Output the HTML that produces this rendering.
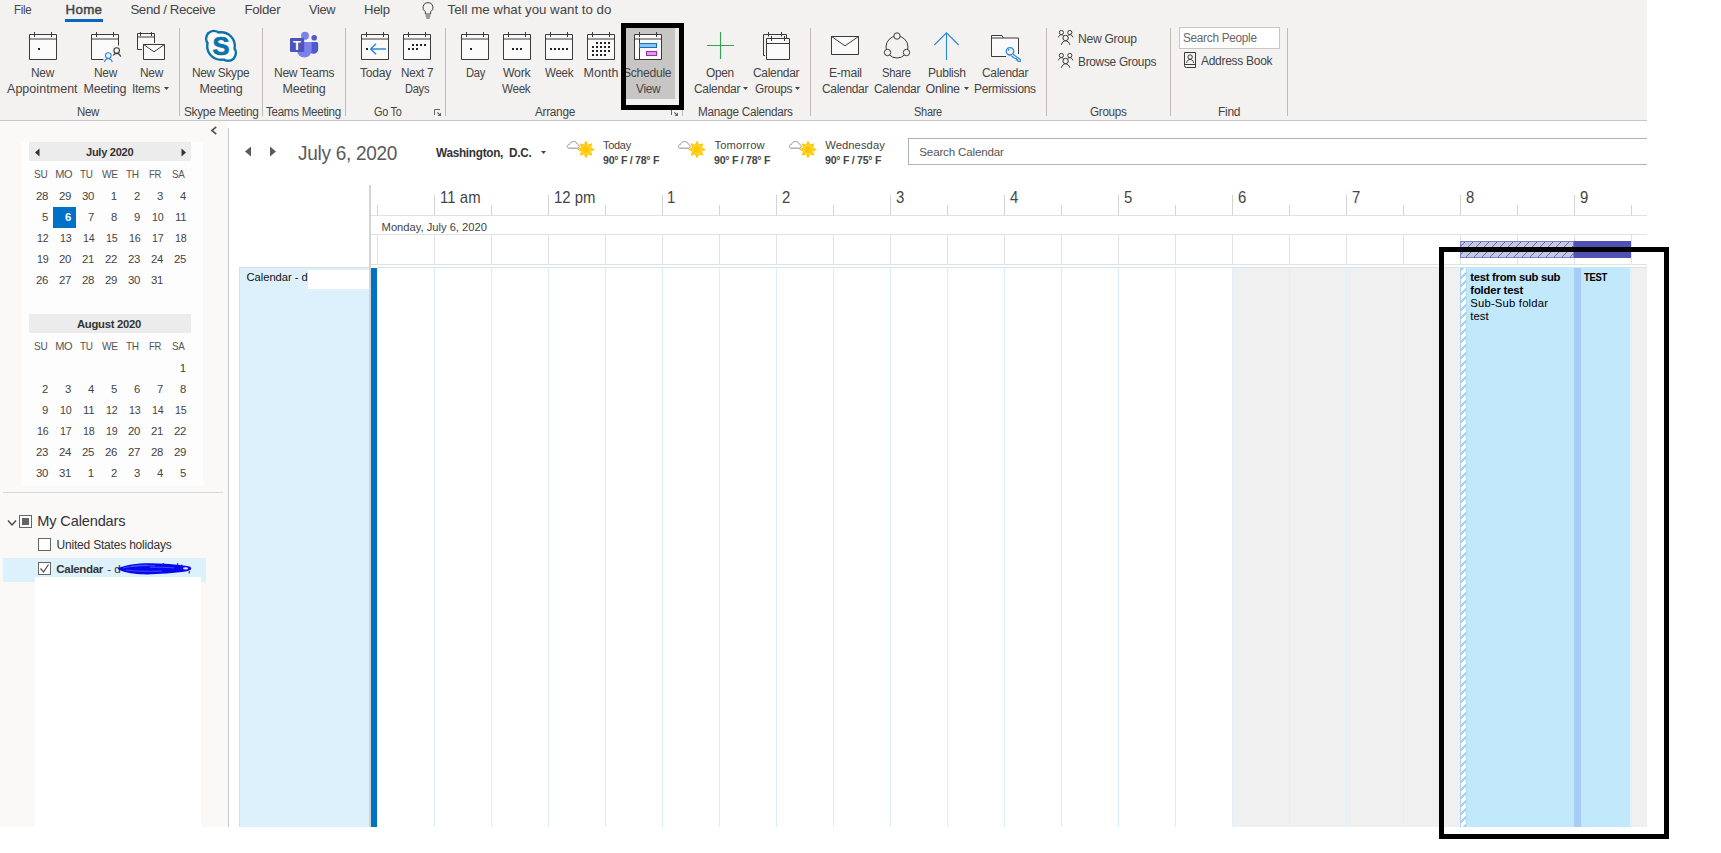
<!DOCTYPE html>
<html><head><meta charset="utf-8"><title>Calendar - Outlook</title>
<style>
html,body{margin:0;padding:0;background:#fff;}
body{width:1721px;height:853px;position:relative;overflow:hidden;font-family:"Liberation Sans",sans-serif;color:#444;}
.r{position:absolute;display:block;}
.t{position:absolute;white-space:pre;line-height:20px;}
</style></head><body>
<div class="r" style="left:0.0px;top:0.0px;width:1647.0px;height:120.0px;background:#f3f2f1;"></div>
<div class="r" style="left:0.0px;top:120.0px;width:1647.0px;height:1.0px;background:#c8c6c4;"></div>
<div class="r" style="left:0.0px;top:121.0px;width:228.0px;height:706.0px;background:#faf9f8;"></div>
<div class="r" style="left:22.0px;top:142.0px;width:181.0px;height:344.0px;background:#fdfdfd;"></div>
<div class="r" style="left:228.0px;top:128.0px;width:1.0px;height:699.0px;background:#c8c8c8;"></div>
<span class="t" style="left:14.4px;top:-0.01px;font-size:13.30px;letter-spacing:-0.300px;transform:scaleX(0.857);transform-origin:0 0;">File</span>
<span class="t" style="left:65.6px;top:-0.01px;font-size:13.30px;letter-spacing:0.307px;-webkit-text-stroke:0.45px #444;">Home</span>
<div class="r" style="left:65.0px;top:19.0px;width:38.0px;height:3.0px;background:#0667c0;"></div>
<span class="t" style="left:130.4px;top:-0.01px;font-size:13.30px;letter-spacing:-0.385px;">Send / Receive</span>
<span class="t" style="left:244.4px;top:-0.01px;font-size:13.30px;letter-spacing:-0.300px;">Folder</span>
<span class="t" style="left:309.4px;top:-0.01px;font-size:13.30px;letter-spacing:-0.300px;transform:scaleX(0.961);transform-origin:0 0;">View</span>
<span class="t" style="left:364.4px;top:-0.01px;font-size:13.30px;letter-spacing:-0.300px;transform:scaleX(0.983);transform-origin:0 0;">Help</span>
<span class="t" style="left:447.6px;top:-0.01px;font-size:13.30px;letter-spacing:-0.012px;">Tell me what you want to do</span>
<svg class="r" style="left:420.0px;top:1.0px;" width="16" height="19" viewBox="0 0 16 19"><path d="M8 1.5a5 5 0 0 0-2.6 9.3V13h5.2v-2.2A5 5 0 0 0 8 1.5z" fill="none" stroke="#444" stroke-width="1"/><path d="M5.6 15h4.8M6.2 17h3.6" stroke="#444" stroke-width="1" fill="none"/></svg>
<div class="r" style="left:178.9px;top:28.0px;width:1.0px;height:88.0px;background:#bebbb8;"></div>
<div class="r" style="left:262.1px;top:28.0px;width:1.0px;height:88.0px;background:#bebbb8;"></div>
<div class="r" style="left:345.1px;top:28.0px;width:1.0px;height:88.0px;background:#bebbb8;"></div>
<div class="r" style="left:445.1px;top:28.0px;width:1.0px;height:88.0px;background:#bebbb8;"></div>
<div class="r" style="left:682.1px;top:28.0px;width:1.0px;height:88.0px;background:#bebbb8;"></div>
<div class="r" style="left:810.1px;top:28.0px;width:1.0px;height:88.0px;background:#bebbb8;"></div>
<div class="r" style="left:1045.9px;top:28.0px;width:1.0px;height:88.0px;background:#bebbb8;"></div>
<div class="r" style="left:1169.9px;top:28.0px;width:1.0px;height:88.0px;background:#bebbb8;"></div>
<div class="r" style="left:1287.1px;top:28.0px;width:1.0px;height:88.0px;background:#bebbb8;"></div>
<svg class="r" style="left:27px;top:30px;" width="34" height="34" viewBox="27 30 34 34"><path d="M29.5 34.5h27v25h-27z" fill="#fafafa" stroke="#3b3a39"/><path d="M34.5 32v5M51.5 32v5M29.5 39h27" stroke="#3b3a39" fill="none"/><rect x="38" y="48" width="2" height="2" fill="#222"/></svg>
<span class="t" style="left:31.4px;top:62.87px;font-size:12.50px;letter-spacing:-0.300px;transform:scaleX(0.951);transform-origin:0 0;">New</span>
<span class="t" style="left:7.0px;top:78.87px;font-size:12.50px;letter-spacing:0.041px;">Appointment</span>
<svg class="r" style="left:88px;top:30px;" width="36" height="34" viewBox="88 30 36 34"><path d="M91.5 34.5h27v25h-27z" fill="#fafafa" stroke="#3b3a39"/><path d="M96.5 32v5M113.5 32v5M91.5 39h27" stroke="#3b3a39" fill="none"/><path d="M103.500 53h20v11h-20zM112 45.500h12v8h-12z" fill="#f3f2f1"/><circle cx="108.300" cy="55.600" r="2.800" fill="none" stroke="#2b88d8" stroke-width="1.100"/><path d="M104.300 62c.8-2.600 2.300-3.400 4-3.400s3.200.8 4 3.400" fill="none" stroke="#2b88d8" stroke-width="1.100"/><circle cx="116.700" cy="50.500" r="2.800" fill="none" stroke="#3b3a39" stroke-width="1.100"/><path d="M113.200 55.500c.9-1.600 2-2.100 3.500-2.100 1.700 0 3.200.9 4 3.300" fill="none" stroke="#3b3a39" stroke-width="1.100"/></svg>
<span class="t" style="left:93.6px;top:62.87px;font-size:12.50px;letter-spacing:-0.300px;transform:scaleX(0.951);transform-origin:0 0;">New</span>
<span class="t" style="left:83.6px;top:78.87px;font-size:12.50px;letter-spacing:-0.279px;">Meeting</span>
<svg class="r" style="left:135px;top:30px;" width="32" height="32" viewBox="135 30 32 32"><path d="M137.500 33.500h17v16h-17z" fill="#fafafa" stroke="#3b3a39"/><path d="M140.500 32v4M151.500 32v4M137.500 37h17" stroke="#3b3a39" fill="none"/><path d="M142 43h14v8h-14z" fill="#f3f2f1"/><path d="M143.500 44.500h21v15h-21z" fill="#fafafa" stroke="#3b3a39"/><path d="M143.500 44.500l10.500 7.300 10.500-7.300" fill="none" stroke="#3b3a39"/></svg>
<span class="t" style="left:139.6px;top:62.87px;font-size:12.50px;letter-spacing:-0.300px;transform:scaleX(0.951);transform-origin:0 0;">New</span>
<span class="t" style="left:132.4px;top:78.87px;font-size:12.50px;letter-spacing:-0.300px;transform:scaleX(0.960);transform-origin:0 0;">Items</span>
<svg class="r" style="left:164.0px;top:87.0px;" width="5" height="3" viewBox="0 0 5 3"><path d="M0 0h5L2.5 3z" fill="#444"/></svg>
<span class="t" style="left:76.6px;top:101.87px;font-size:12.50px;letter-spacing:-0.300px;transform:scaleX(0.918);transform-origin:0 0;">New</span>
<svg class="r" style="left:202px;top:27px;" width="38" height="38" viewBox="202 27 38 38"><g fill="#0b72ab"><circle cx="221" cy="46" r="15"/><circle cx="213.900" cy="38.700" r="9"/><circle cx="228.200" cy="53.100" r="8.900"/></g><g fill="#fff"><circle cx="221" cy="46" r="12.600"/><circle cx="213.900" cy="38.700" r="6.600"/><circle cx="228.200" cy="53.100" r="6.500"/></g><text x="221" y="55" font-family="Liberation Sans, sans-serif" font-weight="700" font-size="25.500" fill="#0b72ab" stroke="#0b72ab" stroke-width=".700" text-anchor="middle">S</text></svg>
<span class="t" style="left:192.4px;top:62.87px;font-size:12.50px;letter-spacing:-0.300px;transform:scaleX(0.947);transform-origin:0 0;">New Skype</span>
<span class="t" style="left:199.6px;top:78.87px;font-size:12.50px;letter-spacing:-0.245px;">Meeting</span>
<span class="t" style="left:183.6px;top:101.87px;font-size:12.50px;letter-spacing:-0.300px;transform:scaleX(0.946);transform-origin:0 0;">Skype Meeting</span>
<svg class="r" style="left:288px;top:30px;" width="32" height="30" viewBox="288 30 32 30"><circle cx="314.200" cy="37.800" r="2.800" fill="#5059c9"/><path d="M309 42h7.700a1.500 1.500 0 0 1 1.500 1.500v5.700a4.600 4.600 0 0 1-9.200 0z" fill="#5059c9"/><circle cx="305" cy="35.800" r="3.950" fill="#7b83eb"/><path d="M297 42h14.700v8.200a7.350 7.350 0 0 1-14.700 0z" fill="#7b83eb"/><rect x="290" y="38" width="14.200" height="14" rx="1" fill="#4b53bc"/><text x="297.100" y="49.900" font-family="Liberation Sans, sans-serif" font-weight="700" font-size="13" fill="#fff" text-anchor="middle">T</text></svg>
<span class="t" style="left:273.6px;top:62.87px;font-size:12.50px;letter-spacing:-0.300px;transform:scaleX(0.964);transform-origin:0 0;">New Teams</span>
<span class="t" style="left:282.6px;top:78.87px;font-size:12.50px;letter-spacing:-0.245px;">Meeting</span>
<span class="t" style="left:266.4px;top:101.87px;font-size:12.50px;letter-spacing:-0.300px;transform:scaleX(0.927);transform-origin:0 0;">Teams Meeting</span>
<svg class="r" style="left:359px;top:30px;" width="34" height="34" viewBox="359 30 34 34"><path d="M361.5 34.5h27v25h-27z" fill="#fafafa" stroke="#3b3a39"/><path d="M366.5 32v5M383.5 32v5M361.5 39h27" stroke="#3b3a39" fill="none"/><rect x="366" y="48" width="2" height="2" fill="#222"/><path d="M386 49H371M376 43.700l-5.300 5.300 5.300 5.300" fill="none" stroke="#2b88d8" stroke-width="1.400"/></svg>
<span class="t" style="left:359.6px;top:62.87px;font-size:12.50px;letter-spacing:-0.300px;transform:scaleX(0.976);transform-origin:0 0;">Today</span>
<svg class="r" style="left:401px;top:30px;" width="34" height="34" viewBox="401 30 34 34"><path d="M403.5 34.5h27v25h-27z" fill="#fafafa" stroke="#3b3a39"/><path d="M408.5 32v5M425.5 32v5M403.5 39h27" stroke="#3b3a39" fill="none"/><rect x="412" y="44" width="2" height="2" fill="#222"/><rect x="416" y="44" width="2" height="2" fill="#222"/><rect x="420" y="44" width="2" height="2" fill="#222"/><rect x="424" y="44" width="2" height="2" fill="#222"/><rect x="408" y="48" width="2" height="2" fill="#222"/><rect x="412" y="48" width="2" height="2" fill="#222"/><rect x="416" y="48" width="2" height="2" fill="#222"/></svg>
<span class="t" style="left:400.6px;top:62.87px;font-size:12.50px;letter-spacing:-0.300px;transform:scaleX(0.936);transform-origin:0 0;">Next 7</span>
<span class="t" style="left:404.6px;top:78.87px;font-size:12.50px;letter-spacing:-0.300px;transform:scaleX(0.885);transform-origin:0 0;">Days</span>
<span class="t" style="left:373.6px;top:101.87px;font-size:12.50px;letter-spacing:-0.300px;transform:scaleX(0.871);transform-origin:0 0;">Go To</span>
<svg class="r" style="left:434.0px;top:109.0px;" width="8" height="8" viewBox="0 0 8 8"><path d="M0.500 6V0.500H6" fill="none" stroke="#666"/><path d="M3.300 3.300l2.500 2.500" stroke="#666" stroke-width="1.200"/><path d="M7 3.500V7H3.500z" fill="#666"/></svg>
<svg class="r" style="left:459px;top:30px;" width="34" height="34" viewBox="459 30 34 34"><path d="M461.5 34.5h27v25h-27z" fill="#fafafa" stroke="#3b3a39"/><path d="M466.5 32v5M483.5 32v5M461.5 39h27" stroke="#3b3a39" fill="none"/><rect x="470" y="48" width="2" height="2" fill="#222"/></svg>
<span class="t" style="left:465.6px;top:62.87px;font-size:12.50px;letter-spacing:-0.300px;transform:scaleX(0.897);transform-origin:0 0;">Day</span>
<svg class="r" style="left:501px;top:30px;" width="34" height="34" viewBox="501 30 34 34"><path d="M503.5 34.5h27v25h-27z" fill="#fafafa" stroke="#3b3a39"/><path d="M508.5 32v5M525.5 32v5M503.5 39h27" stroke="#3b3a39" fill="none"/><rect x="512" y="48" width="2" height="2" fill="#222"/><rect x="516" y="48" width="2" height="2" fill="#222"/><rect x="520" y="48" width="2" height="2" fill="#222"/></svg>
<span class="t" style="left:503.4px;top:62.87px;font-size:12.50px;letter-spacing:-0.300px;transform:scaleX(0.984);transform-origin:0 0;">Work</span>
<span class="t" style="left:502.4px;top:78.87px;font-size:12.50px;letter-spacing:-0.300px;transform:scaleX(0.928);transform-origin:0 0;">Week</span>
<svg class="r" style="left:543px;top:30px;" width="34" height="34" viewBox="543 30 34 34"><path d="M545.5 34.5h27v25h-27z" fill="#fafafa" stroke="#3b3a39"/><path d="M550.5 32v5M567.5 32v5M545.5 39h27" stroke="#3b3a39" fill="none"/><rect x="550" y="48" width="2" height="2" fill="#222"/><rect x="554" y="48" width="2" height="2" fill="#222"/><rect x="558" y="48" width="2" height="2" fill="#222"/><rect x="562" y="48" width="2" height="2" fill="#222"/><rect x="566" y="48" width="2" height="2" fill="#222"/></svg>
<span class="t" style="left:544.6px;top:62.87px;font-size:12.50px;letter-spacing:-0.300px;transform:scaleX(0.921);transform-origin:0 0;">Week</span>
<svg class="r" style="left:585px;top:30px;" width="34" height="34" viewBox="585 30 34 34"><path d="M587.5 34.5h27v25h-27z" fill="#fafafa" stroke="#3b3a39"/><path d="M592.5 32v5M609.5 32v5M587.5 39h27" stroke="#3b3a39" fill="none"/><rect x="596" y="42" width="2" height="2" fill="#222"/><rect x="600" y="42" width="2" height="2" fill="#222"/><rect x="604" y="42" width="2" height="2" fill="#222"/><rect x="608" y="42" width="2" height="2" fill="#222"/><rect x="592" y="46" width="2" height="2" fill="#222"/><rect x="596" y="46" width="2" height="2" fill="#222"/><rect x="600" y="46" width="2" height="2" fill="#222"/><rect x="604" y="46" width="2" height="2" fill="#222"/><rect x="608" y="46" width="2" height="2" fill="#222"/><rect x="592" y="50" width="2" height="2" fill="#222"/><rect x="596" y="50" width="2" height="2" fill="#222"/><rect x="600" y="50" width="2" height="2" fill="#222"/><rect x="604" y="50" width="2" height="2" fill="#222"/><rect x="608" y="50" width="2" height="2" fill="#222"/><rect x="592" y="54" width="2" height="2" fill="#222"/><rect x="596" y="54" width="2" height="2" fill="#222"/><rect x="600" y="54" width="2" height="2" fill="#222"/><rect x="604" y="54" width="2" height="2" fill="#222"/></svg>
<span class="t" style="left:583.6px;top:62.87px;font-size:12.50px;letter-spacing:0.014px;">Month</span>
<span class="t" style="left:535.4px;top:101.87px;font-size:12.50px;letter-spacing:-0.300px;transform:scaleX(0.942);transform-origin:0 0;">Arrange</span>
<div class="r" style="left:626.0px;top:28.0px;width:49.0px;height:71.0px;background:#c8c6c4;"></div>
<div class="r" style="left:675.0px;top:28.0px;width:4.0px;height:71.0px;background:#edebe9;"></div>
<svg class="r" style="left:632px;top:30px;" width="34" height="34" viewBox="632 30 34 34"><path d="M634.5 34.5h27v25h-27z" fill="#fafafa" stroke="#3b3a39"/><path d="M639.5 32v5M656.5 32v5M634.5 39h27" stroke="#3b3a39" fill="none"/><path d="M639.500 38.500v21" stroke="#3b3a39" fill="none"/><rect x="639.500" y="43.500" width="17" height="4" fill="#8ec4f0" stroke="#1072c6"/><rect x="646.500" y="51.500" width="10" height="4" fill="#dc9ede" stroke="#9c27b0"/></svg>
<span class="t" style="left:623.4px;top:62.87px;font-size:12.50px;letter-spacing:-0.300px;transform:scaleX(0.971);transform-origin:0 0;">Schedule</span>
<span class="t" style="left:636.4px;top:78.87px;font-size:12.50px;letter-spacing:-0.300px;transform:scaleX(0.947);transform-origin:0 0;">View</span>
<svg class="r" style="left:671.0px;top:109.0px;" width="8" height="8" viewBox="0 0 8 8"><path d="M0.500 6V0.500H6" fill="none" stroke="#666"/><path d="M3.300 3.300l2.500 2.500" stroke="#666" stroke-width="1.200"/><path d="M7 3.500V7H3.500z" fill="#666"/></svg>
<div class="r" style="left:621px;top:23px;width:53px;height:77px;border:5px solid #000;"></div>
<svg class="r" style="left:705px;top:30px;" width="32" height="32" viewBox="705 30 32 32"><path d="M720.500 32v27M707 45.500h27" stroke="#31a350" stroke-width="1.100" fill="none"/></svg>
<span class="t" style="left:706.4px;top:62.87px;font-size:12.50px;letter-spacing:-0.300px;transform:scaleX(0.950);transform-origin:0 0;">Open</span>
<span class="t" style="left:693.6px;top:78.87px;font-size:12.50px;letter-spacing:-0.300px;transform:scaleX(0.954);transform-origin:0 0;">Calendar</span>
<svg class="r" style="left:743.0px;top:87.0px;" width="5" height="3" viewBox="0 0 5 3"><path d="M0 0h5L2.5 3z" fill="#444"/></svg>
<svg class="r" style="left:761px;top:30px;" width="32" height="32" viewBox="761 30 32 32"><path d="M765 55.500h-1.500v-21h23v4" fill="none" stroke="#3b3a39"/><path d="M768.500 32v4.500M781.500 32v4.500" stroke="#3b3a39"/><path d="M766.500 38.500h23v21h-23z" fill="#fafafa" stroke="#3b3a39"/><path d="M771.500 36v5M784.500 36v5M766.500 43.500h23" stroke="#3b3a39" fill="none"/></svg>
<span class="t" style="left:753.4px;top:62.87px;font-size:12.50px;letter-spacing:-0.300px;transform:scaleX(0.958);transform-origin:0 0;">Calendar</span>
<span class="t" style="left:754.6px;top:78.87px;font-size:12.50px;letter-spacing:-0.300px;transform:scaleX(0.947);transform-origin:0 0;">Groups</span>
<svg class="r" style="left:795.4px;top:87.0px;" width="5" height="3" viewBox="0 0 5 3"><path d="M0 0h5L2.5 3z" fill="#444"/></svg>
<span class="t" style="left:698.4px;top:101.87px;font-size:12.50px;letter-spacing:-0.300px;transform:scaleX(0.939);transform-origin:0 0;">Manage Calendars</span>
<svg class="r" style="left:829px;top:34px;" width="32" height="23" viewBox="829 34 32 23"><path d="M831.500 36.500h27v18h-27z" fill="#fafafa" stroke="#3b3a39"/><path d="M831.500 36.500l13.500 9.300 13.500-9.300" fill="none" stroke="#3b3a39"/></svg>
<span class="t" style="left:828.6px;top:62.87px;font-size:12.50px;letter-spacing:-0.300px;transform:scaleX(0.973);transform-origin:0 0;">E-mail</span>
<span class="t" style="left:821.6px;top:78.87px;font-size:12.50px;letter-spacing:-0.300px;transform:scaleX(0.954);transform-origin:0 0;">Calendar</span>
<svg class="r" style="left:881px;top:30px;" width="32" height="32" viewBox="881 30 32 32"><circle cx="897" cy="47" r="11" fill="none" stroke="#3b3a39"/><circle cx="897" cy="36" r="3.200" fill="#f3f2f1" stroke="#3b3a39"/><circle cx="887.5" cy="52.5" r="3.200" fill="#f3f2f1" stroke="#3b3a39"/><circle cx="906.5" cy="52.5" r="3.200" fill="#f3f2f1" stroke="#3b3a39"/></svg>
<span class="t" style="left:882.0px;top:62.87px;font-size:12.50px;letter-spacing:-0.300px;transform:scaleX(0.902);transform-origin:0 0;">Share</span>
<span class="t" style="left:873.6px;top:78.87px;font-size:12.50px;letter-spacing:-0.300px;transform:scaleX(0.954);transform-origin:0 0;">Calendar</span>
<svg class="r" style="left:931px;top:30px;" width="32" height="32" viewBox="931 30 32 32"><path d="M946.500 60V32.800M934.300 45l12.200-12.200 12.200 12.200" fill="none" stroke="#2b88d8" stroke-width="1.100"/></svg>
<span class="t" style="left:927.6px;top:62.87px;font-size:12.50px;letter-spacing:-0.300px;transform:scaleX(0.969);transform-origin:0 0;">Publish</span>
<span class="t" style="left:925.6px;top:78.87px;font-size:12.50px;letter-spacing:-0.347px;">Online</span>
<svg class="r" style="left:963.6px;top:87.0px;" width="5" height="3" viewBox="0 0 5 3"><path d="M0 0h5L2.5 3z" fill="#444"/></svg>
<svg class="r" style="left:989px;top:33px;" width="35" height="31" viewBox="989 33 35 31"><path d="M1006 56.500h-14.500v-21h10.500l1.500 2.500h15v16" fill="#fafafa" stroke="#3b3a39"/><path d="M991.500 38h12" stroke="#3b3a39" fill="none"/><path d="M1010 51l10 10" stroke="#f3f2f1" stroke-width="5"/><circle cx="1010" cy="51.300" r="5.400" fill="#f3f2f1"/><circle cx="1010" cy="51.300" r="3.700" fill="#f3f2f1" stroke="#2b88d8" stroke-width="1.300"/><circle cx="1008.600" cy="49.800" r=".900" fill="#2b88d8"/><path d="M1012.700 54l7.600 5.500v2h-2.300v-1.600h-1.700v-1.600h-1.700l-3.400-2.600" fill="#f3f2f1" stroke="#2b88d8" stroke-width="1.100" stroke-linejoin="round"/></svg>
<span class="t" style="left:981.6px;top:62.87px;font-size:12.50px;letter-spacing:-0.300px;transform:scaleX(0.954);transform-origin:0 0;">Calendar</span>
<span class="t" style="left:973.6px;top:78.87px;font-size:12.50px;letter-spacing:-0.300px;transform:scaleX(0.953);transform-origin:0 0;">Permissions</span>
<span class="t" style="left:914.4px;top:101.87px;font-size:12.50px;letter-spacing:-0.300px;transform:scaleX(0.877);transform-origin:0 0;">Share</span>
<svg class="r" style="left:1057px;top:29.9px" width="18" height="16" viewBox="1057 0 18 16"><circle cx="1061.400" cy="2.500" r="2.100" fill="none" stroke="#3b3a39"/><circle cx="1069.800" cy="2.500" r="2.100" fill="none" stroke="#3b3a39"/><path d="M1058.300 7.300c.8-1.900 1.900-2.600 3.100-2.600 1 0 1.700.4 2.200 1M1072.900 7.300c-.8-1.900-1.900-2.600-3.100-2.600-1 0-1.700.4-2.200 1" fill="none" stroke="#3b3a39"/><circle cx="1065.600" cy="8" r="2.700" fill="none" stroke="#3b3a39"/><path d="M1061.300 14.800c1-2.700 2.500-4 4.300-4s3.300 1.300 4.300 4" fill="none" stroke="#3b3a39"/></svg>
<span class="t" style="left:1077.6px;top:28.67px;font-size:12.50px;letter-spacing:-0.300px;transform:scaleX(0.970);transform-origin:0 0;">New Group</span>
<svg class="r" style="left:1057px;top:52.9px" width="18" height="16" viewBox="1057 0 18 16"><circle cx="1061.400" cy="2.500" r="2.100" fill="none" stroke="#3b3a39"/><circle cx="1069.800" cy="2.500" r="2.100" fill="none" stroke="#3b3a39"/><path d="M1058.300 7.300c.8-1.900 1.900-2.600 3.100-2.600 1 0 1.700.4 2.200 1M1072.900 7.300c-.8-1.900-1.900-2.600-3.100-2.600-1 0-1.700.4-2.200 1" fill="none" stroke="#3b3a39"/><circle cx="1065.600" cy="8" r="2.700" fill="none" stroke="#3b3a39"/><path d="M1061.300 14.800c1-2.700 2.500-4 4.300-4s3.300 1.300 4.300 4" fill="none" stroke="#3b3a39"/></svg>
<span class="t" style="left:1077.6px;top:51.67px;font-size:12.50px;letter-spacing:-0.300px;transform:scaleX(0.950);transform-origin:0 0;">Browse Groups</span>
<span class="t" style="left:1089.6px;top:101.87px;font-size:12.50px;letter-spacing:-0.300px;transform:scaleX(0.932);transform-origin:0 0;">Groups</span>
<div class="r" style="left:1179px;top:27px;width:99px;height:20px;background:#fff;border:1px solid #c8c6c4;"></div>
<span class="t" style="left:1183.2px;top:27.57px;font-size:12.50px;letter-spacing:-0.300px;color:#666;transform:scaleX(0.943);transform-origin:0 0;">Search People</span>
<svg class="r" style="left:1183px;top:51px;" width="15" height="18" viewBox="1183 51 15 18"><path d="M1195.500 52.500h-11v13a2 2 0 0 0 2 2h9z" fill="none" stroke="#3b3a39"/><path d="M1184.500 64.500h11" stroke="#3b3a39"/><circle cx="1190.100" cy="57" r="2.200" fill="none" stroke="#3b3a39"/><path d="M1186.600 62.800c.4-2.300 1.800-3.300 3.500-3.300s3.100 1 3.500 3.300" fill="none" stroke="#3b3a39"/></svg>
<span class="t" style="left:1201.4px;top:50.67px;font-size:12.50px;letter-spacing:-0.300px;transform:scaleX(0.961);transform-origin:0 0;">Address Book</span>
<span class="t" style="left:1217.6px;top:101.87px;font-size:12.50px;letter-spacing:-0.300px;transform:scaleX(0.957);transform-origin:0 0;">Find</span>
<svg class="r" style="left:210.0px;top:126.0px;" width="8" height="9" viewBox="0 0 8 9"><path d="M6.200 .9L1.900 4.500 6.200 8.100" fill="none" stroke="#555" stroke-width="1.700"/></svg>
<div class="r" style="left:29.0px;top:142.0px;width:162.0px;height:19.0px;background:#ececec;"></div>
<span class="t" style="left:86.0px;top:141.98px;font-size:11.60px;letter-spacing:-0.300px;font-weight:700;color:#333;transform:scaleX(0.957);transform-origin:0 0;">July 2020</span>
<svg class="r" style="left:34.0px;top:147.5px;" width="6" height="9" viewBox="0 0 6 9"><path d="M5.500 0.500v8L1 4.500z" fill="#333"/></svg>
<svg class="r" style="left:180.5px;top:147.5px;" width="6" height="9" viewBox="0 0 6 9"><path d="M0.500 0.500v8L5 4.500z" fill="#333"/></svg>
<span class="t" style="left:34.0px;top:164.19px;font-size:11.00px;letter-spacing:-0.300px;color:#555;transform:scaleX(0.914);transform-origin:0 0;">SU</span>
<span class="t" style="left:55.3px;top:164.19px;font-size:11.00px;letter-spacing:-0.419px;color:#555;">MO</span>
<span class="t" style="left:80.3px;top:164.19px;font-size:11.00px;letter-spacing:-0.300px;color:#555;transform:scaleX(0.898);transform-origin:0 0;">TU</span>
<span class="t" style="left:101.5px;top:164.19px;font-size:11.00px;letter-spacing:-0.300px;color:#555;transform:scaleX(0.924);transform-origin:0 0;">WE</span>
<span class="t" style="left:126.4px;top:164.19px;font-size:11.00px;letter-spacing:-0.300px;color:#555;transform:scaleX(0.912);transform-origin:0 0;">TH</span>
<span class="t" style="left:149.3px;top:164.19px;font-size:11.00px;letter-spacing:-0.300px;color:#555;transform:scaleX(0.863);transform-origin:0 0;">FR</span>
<span class="t" style="left:172.2px;top:164.19px;font-size:11.00px;letter-spacing:-0.300px;color:#555;transform:scaleX(0.890);transform-origin:0 0;">SA</span>
<span class="t" style="left:36.0px;top:185.78px;font-size:11.60px;letter-spacing:-0.300px;transform:scaleX(0.984);transform-origin:0 0;">28</span>
<span class="t" style="left:59.0px;top:185.78px;font-size:11.60px;letter-spacing:-0.300px;transform:scaleX(0.984);transform-origin:0 0;">29</span>
<span class="t" style="left:82.0px;top:185.78px;font-size:11.60px;letter-spacing:-0.300px;transform:scaleX(0.984);transform-origin:0 0;">30</span>
<span class="t" style="left:110.8px;top:185.78px;font-size:11.60px;letter-spacing:0.000px;">1</span>
<span class="t" style="left:134.4px;top:185.78px;font-size:11.60px;letter-spacing:-0.300px;transform:scaleX(0.975);transform-origin:0 0;">2</span>
<span class="t" style="left:157.4px;top:185.78px;font-size:11.60px;letter-spacing:-0.300px;transform:scaleX(0.975);transform-origin:0 0;">3</span>
<span class="t" style="left:180.4px;top:185.78px;font-size:11.60px;letter-spacing:-0.300px;transform:scaleX(0.975);transform-origin:0 0;">4</span>
<span class="t" style="left:42.4px;top:206.78px;font-size:11.60px;letter-spacing:-0.300px;transform:scaleX(0.975);transform-origin:0 0;">5</span>
<div class="r" style="left:53.0px;top:207.0px;width:23.0px;height:21.0px;background:#0072c6;"></div>
<span class="t" style="left:65.4px;top:206.78px;font-size:11.60px;letter-spacing:-0.300px;font-weight:700;color:#fff;transform:scaleX(0.975);transform-origin:0 0;">6</span>
<span class="t" style="left:88.4px;top:206.78px;font-size:11.60px;letter-spacing:-0.300px;transform:scaleX(0.975);transform-origin:0 0;">7</span>
<span class="t" style="left:111.4px;top:206.78px;font-size:11.60px;letter-spacing:-0.300px;transform:scaleX(0.975);transform-origin:0 0;">8</span>
<span class="t" style="left:134.4px;top:206.78px;font-size:11.60px;letter-spacing:-0.300px;transform:scaleX(0.975);transform-origin:0 0;">9</span>
<span class="t" style="left:151.8px;top:206.78px;font-size:11.60px;letter-spacing:-0.300px;transform:scaleX(0.920);transform-origin:0 0;">10</span>
<span class="t" style="left:174.8px;top:206.78px;font-size:11.60px;letter-spacing:-0.300px;transform:scaleX(0.988);transform-origin:0 0;">11</span>
<span class="t" style="left:36.8px;top:227.78px;font-size:11.60px;letter-spacing:-0.300px;transform:scaleX(0.920);transform-origin:0 0;">12</span>
<span class="t" style="left:59.8px;top:227.78px;font-size:11.60px;letter-spacing:-0.300px;transform:scaleX(0.920);transform-origin:0 0;">13</span>
<span class="t" style="left:82.8px;top:227.78px;font-size:11.60px;letter-spacing:-0.300px;transform:scaleX(0.920);transform-origin:0 0;">14</span>
<span class="t" style="left:105.8px;top:227.78px;font-size:11.60px;letter-spacing:-0.300px;transform:scaleX(0.920);transform-origin:0 0;">15</span>
<span class="t" style="left:128.8px;top:227.78px;font-size:11.60px;letter-spacing:-0.300px;transform:scaleX(0.920);transform-origin:0 0;">16</span>
<span class="t" style="left:151.8px;top:227.78px;font-size:11.60px;letter-spacing:-0.300px;transform:scaleX(0.920);transform-origin:0 0;">17</span>
<span class="t" style="left:174.8px;top:227.78px;font-size:11.60px;letter-spacing:-0.300px;transform:scaleX(0.920);transform-origin:0 0;">18</span>
<span class="t" style="left:36.8px;top:248.78px;font-size:11.60px;letter-spacing:-0.300px;transform:scaleX(0.920);transform-origin:0 0;">19</span>
<span class="t" style="left:59.0px;top:248.78px;font-size:11.60px;letter-spacing:-0.300px;transform:scaleX(0.984);transform-origin:0 0;">20</span>
<span class="t" style="left:82.0px;top:248.78px;font-size:11.60px;letter-spacing:-0.300px;transform:scaleX(0.984);transform-origin:0 0;">21</span>
<span class="t" style="left:105.0px;top:248.78px;font-size:11.60px;letter-spacing:-0.300px;transform:scaleX(0.984);transform-origin:0 0;">22</span>
<span class="t" style="left:128.0px;top:248.78px;font-size:11.60px;letter-spacing:-0.300px;transform:scaleX(0.984);transform-origin:0 0;">23</span>
<span class="t" style="left:151.0px;top:248.78px;font-size:11.60px;letter-spacing:-0.300px;transform:scaleX(0.984);transform-origin:0 0;">24</span>
<span class="t" style="left:174.0px;top:248.78px;font-size:11.60px;letter-spacing:-0.300px;transform:scaleX(0.984);transform-origin:0 0;">25</span>
<span class="t" style="left:36.0px;top:269.78px;font-size:11.60px;letter-spacing:-0.300px;transform:scaleX(0.984);transform-origin:0 0;">26</span>
<span class="t" style="left:59.0px;top:269.78px;font-size:11.60px;letter-spacing:-0.300px;transform:scaleX(0.984);transform-origin:0 0;">27</span>
<span class="t" style="left:82.0px;top:269.78px;font-size:11.60px;letter-spacing:-0.300px;transform:scaleX(0.984);transform-origin:0 0;">28</span>
<span class="t" style="left:105.0px;top:269.78px;font-size:11.60px;letter-spacing:-0.300px;transform:scaleX(0.984);transform-origin:0 0;">29</span>
<span class="t" style="left:128.0px;top:269.78px;font-size:11.60px;letter-spacing:-0.300px;transform:scaleX(0.984);transform-origin:0 0;">30</span>
<span class="t" style="left:151.0px;top:269.78px;font-size:11.60px;letter-spacing:-0.300px;transform:scaleX(0.984);transform-origin:0 0;">31</span>
<div class="r" style="left:29.0px;top:314.0px;width:162.0px;height:19.0px;background:#ececec;"></div>
<span class="t" style="left:77.3px;top:313.98px;font-size:11.60px;letter-spacing:-0.300px;font-weight:700;color:#333;transform:scaleX(0.975);transform-origin:0 0;">August 2020</span>
<span class="t" style="left:34.0px;top:336.19px;font-size:11.00px;letter-spacing:-0.300px;color:#555;transform:scaleX(0.914);transform-origin:0 0;">SU</span>
<span class="t" style="left:55.3px;top:336.19px;font-size:11.00px;letter-spacing:-0.419px;color:#555;">MO</span>
<span class="t" style="left:80.3px;top:336.19px;font-size:11.00px;letter-spacing:-0.300px;color:#555;transform:scaleX(0.898);transform-origin:0 0;">TU</span>
<span class="t" style="left:101.5px;top:336.19px;font-size:11.00px;letter-spacing:-0.300px;color:#555;transform:scaleX(0.924);transform-origin:0 0;">WE</span>
<span class="t" style="left:126.4px;top:336.19px;font-size:11.00px;letter-spacing:-0.300px;color:#555;transform:scaleX(0.912);transform-origin:0 0;">TH</span>
<span class="t" style="left:149.3px;top:336.19px;font-size:11.00px;letter-spacing:-0.300px;color:#555;transform:scaleX(0.863);transform-origin:0 0;">FR</span>
<span class="t" style="left:172.2px;top:336.19px;font-size:11.00px;letter-spacing:-0.300px;color:#555;transform:scaleX(0.890);transform-origin:0 0;">SA</span>
<span class="t" style="left:179.8px;top:357.78px;font-size:11.60px;letter-spacing:0.000px;">1</span>
<span class="t" style="left:42.4px;top:378.78px;font-size:11.60px;letter-spacing:-0.300px;transform:scaleX(0.975);transform-origin:0 0;">2</span>
<span class="t" style="left:65.4px;top:378.78px;font-size:11.60px;letter-spacing:-0.300px;transform:scaleX(0.975);transform-origin:0 0;">3</span>
<span class="t" style="left:88.4px;top:378.78px;font-size:11.60px;letter-spacing:-0.300px;transform:scaleX(0.975);transform-origin:0 0;">4</span>
<span class="t" style="left:111.4px;top:378.78px;font-size:11.60px;letter-spacing:-0.300px;transform:scaleX(0.975);transform-origin:0 0;">5</span>
<span class="t" style="left:134.4px;top:378.78px;font-size:11.60px;letter-spacing:-0.300px;transform:scaleX(0.975);transform-origin:0 0;">6</span>
<span class="t" style="left:157.4px;top:378.78px;font-size:11.60px;letter-spacing:-0.300px;transform:scaleX(0.975);transform-origin:0 0;">7</span>
<span class="t" style="left:180.4px;top:378.78px;font-size:11.60px;letter-spacing:-0.300px;transform:scaleX(0.975);transform-origin:0 0;">8</span>
<span class="t" style="left:42.4px;top:399.78px;font-size:11.60px;letter-spacing:-0.300px;transform:scaleX(0.975);transform-origin:0 0;">9</span>
<span class="t" style="left:59.8px;top:399.78px;font-size:11.60px;letter-spacing:-0.300px;transform:scaleX(0.920);transform-origin:0 0;">10</span>
<span class="t" style="left:82.8px;top:399.78px;font-size:11.60px;letter-spacing:-0.300px;transform:scaleX(0.988);transform-origin:0 0;">11</span>
<span class="t" style="left:105.8px;top:399.78px;font-size:11.60px;letter-spacing:-0.300px;transform:scaleX(0.920);transform-origin:0 0;">12</span>
<span class="t" style="left:128.8px;top:399.78px;font-size:11.60px;letter-spacing:-0.300px;transform:scaleX(0.920);transform-origin:0 0;">13</span>
<span class="t" style="left:151.8px;top:399.78px;font-size:11.60px;letter-spacing:-0.300px;transform:scaleX(0.920);transform-origin:0 0;">14</span>
<span class="t" style="left:174.8px;top:399.78px;font-size:11.60px;letter-spacing:-0.300px;transform:scaleX(0.920);transform-origin:0 0;">15</span>
<span class="t" style="left:36.8px;top:420.78px;font-size:11.60px;letter-spacing:-0.300px;transform:scaleX(0.920);transform-origin:0 0;">16</span>
<span class="t" style="left:59.8px;top:420.78px;font-size:11.60px;letter-spacing:-0.300px;transform:scaleX(0.920);transform-origin:0 0;">17</span>
<span class="t" style="left:82.8px;top:420.78px;font-size:11.60px;letter-spacing:-0.300px;transform:scaleX(0.920);transform-origin:0 0;">18</span>
<span class="t" style="left:105.8px;top:420.78px;font-size:11.60px;letter-spacing:-0.300px;transform:scaleX(0.920);transform-origin:0 0;">19</span>
<span class="t" style="left:128.0px;top:420.78px;font-size:11.60px;letter-spacing:-0.300px;transform:scaleX(0.984);transform-origin:0 0;">20</span>
<span class="t" style="left:151.0px;top:420.78px;font-size:11.60px;letter-spacing:-0.300px;transform:scaleX(0.984);transform-origin:0 0;">21</span>
<span class="t" style="left:174.0px;top:420.78px;font-size:11.60px;letter-spacing:-0.300px;transform:scaleX(0.984);transform-origin:0 0;">22</span>
<span class="t" style="left:36.0px;top:441.78px;font-size:11.60px;letter-spacing:-0.300px;transform:scaleX(0.984);transform-origin:0 0;">23</span>
<span class="t" style="left:59.0px;top:441.78px;font-size:11.60px;letter-spacing:-0.300px;transform:scaleX(0.984);transform-origin:0 0;">24</span>
<span class="t" style="left:82.0px;top:441.78px;font-size:11.60px;letter-spacing:-0.300px;transform:scaleX(0.984);transform-origin:0 0;">25</span>
<span class="t" style="left:105.0px;top:441.78px;font-size:11.60px;letter-spacing:-0.300px;transform:scaleX(0.984);transform-origin:0 0;">26</span>
<span class="t" style="left:128.0px;top:441.78px;font-size:11.60px;letter-spacing:-0.300px;transform:scaleX(0.984);transform-origin:0 0;">27</span>
<span class="t" style="left:151.0px;top:441.78px;font-size:11.60px;letter-spacing:-0.300px;transform:scaleX(0.984);transform-origin:0 0;">28</span>
<span class="t" style="left:174.0px;top:441.78px;font-size:11.60px;letter-spacing:-0.300px;transform:scaleX(0.984);transform-origin:0 0;">29</span>
<span class="t" style="left:36.0px;top:462.78px;font-size:11.60px;letter-spacing:-0.300px;transform:scaleX(0.984);transform-origin:0 0;">30</span>
<span class="t" style="left:59.0px;top:462.78px;font-size:11.60px;letter-spacing:-0.300px;transform:scaleX(0.984);transform-origin:0 0;">31</span>
<span class="t" style="left:87.8px;top:462.78px;font-size:11.60px;letter-spacing:0.000px;">1</span>
<span class="t" style="left:111.4px;top:462.78px;font-size:11.60px;letter-spacing:-0.300px;transform:scaleX(0.975);transform-origin:0 0;">2</span>
<span class="t" style="left:134.4px;top:462.78px;font-size:11.60px;letter-spacing:-0.300px;transform:scaleX(0.975);transform-origin:0 0;">3</span>
<span class="t" style="left:157.4px;top:462.78px;font-size:11.60px;letter-spacing:-0.300px;transform:scaleX(0.975);transform-origin:0 0;">4</span>
<span class="t" style="left:180.4px;top:462.78px;font-size:11.60px;letter-spacing:-0.300px;transform:scaleX(0.975);transform-origin:0 0;">5</span>
<div class="r" style="left:3.0px;top:492.0px;width:220.0px;height:1.0px;background:#d8d8d8;"></div>
<svg class="r" style="left:7.0px;top:519.0px;" width="10" height="8" viewBox="0 0 10 8"><path d="M1 1.500l4 4.500 4-4.500" fill="none" stroke="#444" stroke-width="1.300"/></svg>
<div class="r" style="left:19px;top:515px;width:11px;height:11px;border:1px solid #666;background:#fff;"></div>
<div class="r" style="left:22.0px;top:518.0px;width:7.0px;height:7.0px;background:#666;"></div>
<span class="t" style="left:37.3px;top:510.64px;font-size:14.60px;letter-spacing:-0.161px;color:#333;">My Calendars</span>
<div class="r" style="left:38px;top:538px;width:11px;height:11px;border:1px solid #666;background:#fff;"></div>
<span class="t" style="left:56.5px;top:534.54px;font-size:12.00px;letter-spacing:-0.195px;color:#333;">United States holidays</span>
<div class="r" style="left:3.0px;top:558.0px;width:203.0px;height:24.0px;background:#ddf1fd;"></div>
<div class="r" style="left:38px;top:562px;width:11px;height:11px;border:1px solid #666;background:#fff;"></div>
<svg class="r" style="left:39.0px;top:563.0px;" width="11" height="11" viewBox="0 0 11 11"><path d="M1.500 5.500l3 3.500 5-7.500" fill="none" stroke="#555" stroke-width="1.300"/></svg>
<span class="t" style="left:56.3px;top:558.88px;font-size:11.60px;letter-spacing:-0.363px;font-weight:700;color:#333;">Calendar</span>
<span class="t" style="left:107.3px;top:558.88px;font-size:11.60px;letter-spacing:0.000px;color:#333;">-</span>
<span class="t" style="left:114.3px;top:558.88px;font-size:11.60px;letter-spacing:0.000px;color:#333;">d</span>
<svg class="r" style="left:114px;top:559px;" width="82" height="19" viewBox="114 559 82 19"><path d="M163.400 563v4M177.600 563v4M181.600 564.500v3M189.300 571v2.500" stroke="#555" stroke-width="1.400"/><path d="M117.300 568.600C126 564.300 140 562.800 152 563.200 168 563.600 184 564.800 189.500 566.600 192.500 567.800 191.600 570.600 187 571.300 172 573.400 154 574.800 141 574.300 130 573.800 120 571.500 117.300 568.600Z" fill="#0808ee"/><path d="M123 568c8-2 20-2.600 32-2.300M126 570c9 1.300 22 1.600 36 1M150 567.300c8-.3 17 0 24 .6M131 566.300c5-.9 11-1.300 16-1.300" fill="none" stroke="#5f6cf3" stroke-width=".7"/><ellipse cx="185.600" cy="568.400" rx="2.600" ry="1.100" fill="#e6ecff"/></svg>
<div class="r" style="left:35.0px;top:577.0px;width:166.0px;height:250.0px;background:#fff;"></div>
<svg class="r" style="left:244.0px;top:146.0px;" width="8" height="11" viewBox="0 0 8 11"><path d="M7 0.500v10L1 5.500z" fill="#5a5a5a"/></svg>
<svg class="r" style="left:269.0px;top:146.0px;" width="8" height="11" viewBox="0 0 8 11"><path d="M1 0.500v10L7 5.500z" fill="#5a5a5a"/></svg>
<span class="t" style="left:298.2px;top:142.80px;font-size:20.20px;letter-spacing:-0.300px;color:#5a5a5a;transform:scaleX(0.942);transform-origin:0 0;">July 6, 2020</span>
<span class="t" style="left:435.5px;top:143.17px;font-size:12.20px;letter-spacing:-0.300px;font-weight:700;color:#333;transform:scaleX(0.967);transform-origin:0 0;">Washington,  D.C.</span>
<svg class="r" style="left:541.0px;top:151.0px;" width="5" height="3" viewBox="0 0 5 3"><path d="M0 0h5L2.500 3z" fill="#444"/></svg>
<svg class="r" style="left:565.9px;top:139px;" width="30" height="21" viewBox="565.9 139 30 21"><g transform="translate(585.9,149.5)"><path d="M0-9L2.500-4.200H-2.500z" transform="rotate(0)" fill="#ffc800"/><path d="M0-9L2.500-4.200H-2.500z" transform="rotate(45)" fill="#ffc800"/><path d="M0-9L2.500-4.200H-2.500z" transform="rotate(90)" fill="#ffc800"/><path d="M0-9L2.500-4.200H-2.500z" transform="rotate(135)" fill="#ffc800"/><path d="M0-9L2.500-4.200H-2.500z" transform="rotate(180)" fill="#ffc800"/><path d="M0-9L2.500-4.200H-2.500z" transform="rotate(225)" fill="#ffc800"/><path d="M0-9L2.500-4.200H-2.500z" transform="rotate(270)" fill="#ffc800"/><path d="M0-9L2.500-4.200H-2.500z" transform="rotate(315)" fill="#ffc800"/><circle r="4.700" fill="#ffe27a"/><circle r="3.900" fill="#ffc800"/></g><g transform="translate(0.04,0)"><path d="M569.200 148.300C567.600 148.300 567.200 147.200 567.200 146.400 567.200 145.200 568.200 144.500 569.300 144.500 569.800 142.600 571.500 141.500 573.300 141.500 575.300 141.500 576.800 142.600 577.300 144.200 578.400 144.400 579 145.300 579 146.300 579 147.400 578.200 148.300 577.200 148.300Z" fill="#fff" stroke="#8c8c8c" stroke-width=".9"/><path d="M568.800 148.300h8.800" stroke="#b0b0b0" stroke-width="1.200"/></g></svg>
<span class="t" style="left:603.4px;top:134.92px;font-size:11.20px;letter-spacing:-0.300px;transform:scaleX(0.983);transform-origin:0 0;">Today</span>
<span class="t" style="left:603.4px;top:149.58px;font-size:11.60px;letter-spacing:-0.300px;font-weight:700;transform:scaleX(0.915);transform-origin:0 0;">90° F / 78° F</span>
<svg class="r" style="left:676.7px;top:139px;" width="30" height="21" viewBox="676.7 139 30 21"><g transform="translate(696.7,149.5)"><path d="M0-9L2.500-4.200H-2.500z" transform="rotate(0)" fill="#ffc800"/><path d="M0-9L2.500-4.200H-2.500z" transform="rotate(45)" fill="#ffc800"/><path d="M0-9L2.500-4.200H-2.500z" transform="rotate(90)" fill="#ffc800"/><path d="M0-9L2.500-4.200H-2.500z" transform="rotate(135)" fill="#ffc800"/><path d="M0-9L2.500-4.200H-2.500z" transform="rotate(180)" fill="#ffc800"/><path d="M0-9L2.500-4.200H-2.500z" transform="rotate(225)" fill="#ffc800"/><path d="M0-9L2.500-4.200H-2.500z" transform="rotate(270)" fill="#ffc800"/><path d="M0-9L2.500-4.200H-2.500z" transform="rotate(315)" fill="#ffc800"/><circle r="4.700" fill="#ffe27a"/><circle r="3.900" fill="#ffc800"/></g><g transform="translate(110.84,0)"><path d="M569.200 148.300C567.600 148.300 567.200 147.200 567.200 146.400 567.200 145.200 568.200 144.500 569.300 144.500 569.800 142.600 571.500 141.500 573.300 141.500 575.300 141.500 576.800 142.600 577.300 144.200 578.400 144.400 579 145.300 579 146.300 579 147.400 578.200 148.300 577.200 148.300Z" fill="#fff" stroke="#8c8c8c" stroke-width=".9"/><path d="M568.800 148.300h8.800" stroke="#b0b0b0" stroke-width="1.200"/></g></svg>
<span class="t" style="left:714.4px;top:134.92px;font-size:11.20px;letter-spacing:0.162px;">Tomorrow</span>
<span class="t" style="left:714.4px;top:149.58px;font-size:11.60px;letter-spacing:-0.300px;font-weight:700;transform:scaleX(0.915);transform-origin:0 0;">90° F / 78° F</span>
<svg class="r" style="left:787.6px;top:139px;" width="30" height="21" viewBox="787.6 139 30 21"><g transform="translate(807.6,149.5)"><path d="M0-9L2.500-4.200H-2.500z" transform="rotate(0)" fill="#ffc800"/><path d="M0-9L2.500-4.200H-2.500z" transform="rotate(45)" fill="#ffc800"/><path d="M0-9L2.500-4.200H-2.500z" transform="rotate(90)" fill="#ffc800"/><path d="M0-9L2.500-4.200H-2.500z" transform="rotate(135)" fill="#ffc800"/><path d="M0-9L2.500-4.200H-2.500z" transform="rotate(180)" fill="#ffc800"/><path d="M0-9L2.500-4.200H-2.500z" transform="rotate(225)" fill="#ffc800"/><path d="M0-9L2.500-4.200H-2.500z" transform="rotate(270)" fill="#ffc800"/><path d="M0-9L2.500-4.200H-2.500z" transform="rotate(315)" fill="#ffc800"/><circle r="4.700" fill="#ffe27a"/><circle r="3.900" fill="#ffc800"/></g><g transform="translate(221.74,0)"><path d="M569.200 148.300C567.600 148.300 567.200 147.200 567.200 146.400 567.200 145.200 568.200 144.500 569.300 144.500 569.800 142.600 571.500 141.500 573.300 141.500 575.300 141.500 576.800 142.600 577.300 144.200 578.400 144.400 579 145.300 579 146.300 579 147.400 578.200 148.300 577.200 148.300Z" fill="#fff" stroke="#8c8c8c" stroke-width=".9"/><path d="M568.800 148.300h8.800" stroke="#b0b0b0" stroke-width="1.200"/></g></svg>
<span class="t" style="left:825.2px;top:134.92px;font-size:11.20px;letter-spacing:0.095px;">Wednesday</span>
<span class="t" style="left:825.2px;top:149.58px;font-size:11.60px;letter-spacing:-0.300px;font-weight:700;transform:scaleX(0.915);transform-origin:0 0;">90° F / 75° F</span>
<div class="r" style="left:908px;top:138px;width:738px;height:25px;background:#fff;border:1px solid #abb3c2;border-right:none;"></div>
<span class="t" style="left:919.3px;top:141.88px;font-size:11.60px;letter-spacing:-0.168px;color:#555;">Search Calendar</span>
<div class="r" style="left:369.0px;top:185.0px;width:2.0px;height:642.0px;background:#d4d4d4;"></div>
<div class="r" style="left:371.0px;top:215.0px;width:1276.0px;height:1.0px;background:#e1e1e1;"></div>
<div class="r" style="left:371.0px;top:234.0px;width:1276.0px;height:1.0px;background:#e1e1e1;"></div>
<div class="r" style="left:371.0px;top:264.0px;width:1276.0px;height:1.0px;background:#e1e1e1;"></div>
<div class="r" style="left:376.9px;top:205.0px;width:1.0px;height:10.0px;background:#d4d4d4;"></div>
<div class="r" style="left:376.9px;top:235.0px;width:1.0px;height:29.0px;background:#e1e1e1;"></div>
<div class="r" style="left:433.9px;top:195.0px;width:1.0px;height:20.0px;background:#d4d4d4;"></div>
<div class="r" style="left:433.9px;top:235.0px;width:1.0px;height:29.0px;background:#e1e1e1;"></div>
<span class="t" style="left:439.6px;top:187.39px;font-size:16.20px;letter-spacing:0.077px;transform:scaleX(0.920);transform-origin:0 0;">11 am</span>
<div class="r" style="left:490.9px;top:205.0px;width:1.0px;height:10.0px;background:#d4d4d4;"></div>
<div class="r" style="left:490.9px;top:235.0px;width:1.0px;height:29.0px;background:#e1e1e1;"></div>
<div class="r" style="left:547.9px;top:195.0px;width:1.0px;height:20.0px;background:#d4d4d4;"></div>
<div class="r" style="left:547.9px;top:235.0px;width:1.0px;height:29.0px;background:#e1e1e1;"></div>
<span class="t" style="left:553.6px;top:187.39px;font-size:16.20px;letter-spacing:-0.006px;transform:scaleX(0.920);transform-origin:0 0;">12 pm</span>
<div class="r" style="left:604.9px;top:205.0px;width:1.0px;height:10.0px;background:#d4d4d4;"></div>
<div class="r" style="left:604.9px;top:235.0px;width:1.0px;height:29.0px;background:#e1e1e1;"></div>
<div class="r" style="left:661.9px;top:195.0px;width:1.0px;height:20.0px;background:#d4d4d4;"></div>
<div class="r" style="left:661.9px;top:235.0px;width:1.0px;height:29.0px;background:#e1e1e1;"></div>
<span class="t" style="left:666.9px;top:187.39px;font-size:16.20px;letter-spacing:0.000px;transform:scaleX(0.920);transform-origin:0 0;">1</span>
<div class="r" style="left:718.9px;top:205.0px;width:1.0px;height:10.0px;background:#d4d4d4;"></div>
<div class="r" style="left:718.9px;top:235.0px;width:1.0px;height:29.0px;background:#e1e1e1;"></div>
<div class="r" style="left:775.9px;top:195.0px;width:1.0px;height:20.0px;background:#d4d4d4;"></div>
<div class="r" style="left:775.9px;top:235.0px;width:1.0px;height:29.0px;background:#e1e1e1;"></div>
<span class="t" style="left:781.5px;top:187.39px;font-size:16.20px;letter-spacing:0.000px;transform:scaleX(0.920);transform-origin:0 0;">2</span>
<div class="r" style="left:832.9px;top:205.0px;width:1.0px;height:10.0px;background:#d4d4d4;"></div>
<div class="r" style="left:832.9px;top:235.0px;width:1.0px;height:29.0px;background:#e1e1e1;"></div>
<div class="r" style="left:889.9px;top:195.0px;width:1.0px;height:20.0px;background:#d4d4d4;"></div>
<div class="r" style="left:889.9px;top:235.0px;width:1.0px;height:29.0px;background:#e1e1e1;"></div>
<span class="t" style="left:895.5px;top:187.39px;font-size:16.20px;letter-spacing:0.000px;transform:scaleX(0.920);transform-origin:0 0;">3</span>
<div class="r" style="left:946.9px;top:205.0px;width:1.0px;height:10.0px;background:#d4d4d4;"></div>
<div class="r" style="left:946.9px;top:235.0px;width:1.0px;height:29.0px;background:#e1e1e1;"></div>
<div class="r" style="left:1003.9px;top:195.0px;width:1.0px;height:20.0px;background:#d4d4d4;"></div>
<div class="r" style="left:1003.9px;top:235.0px;width:1.0px;height:29.0px;background:#e1e1e1;"></div>
<span class="t" style="left:1009.5px;top:187.39px;font-size:16.20px;letter-spacing:0.000px;transform:scaleX(0.920);transform-origin:0 0;">4</span>
<div class="r" style="left:1060.9px;top:205.0px;width:1.0px;height:10.0px;background:#d4d4d4;"></div>
<div class="r" style="left:1060.9px;top:235.0px;width:1.0px;height:29.0px;background:#e1e1e1;"></div>
<div class="r" style="left:1117.9px;top:195.0px;width:1.0px;height:20.0px;background:#d4d4d4;"></div>
<div class="r" style="left:1117.9px;top:235.0px;width:1.0px;height:29.0px;background:#e1e1e1;"></div>
<span class="t" style="left:1123.5px;top:187.39px;font-size:16.20px;letter-spacing:0.000px;transform:scaleX(0.920);transform-origin:0 0;">5</span>
<div class="r" style="left:1174.9px;top:205.0px;width:1.0px;height:10.0px;background:#d4d4d4;"></div>
<div class="r" style="left:1174.9px;top:235.0px;width:1.0px;height:29.0px;background:#e1e1e1;"></div>
<div class="r" style="left:1231.9px;top:195.0px;width:1.0px;height:20.0px;background:#d4d4d4;"></div>
<div class="r" style="left:1231.9px;top:235.0px;width:1.0px;height:29.0px;background:#e1e1e1;"></div>
<span class="t" style="left:1237.5px;top:187.39px;font-size:16.20px;letter-spacing:0.000px;transform:scaleX(0.920);transform-origin:0 0;">6</span>
<div class="r" style="left:1288.9px;top:205.0px;width:1.0px;height:10.0px;background:#d4d4d4;"></div>
<div class="r" style="left:1288.9px;top:235.0px;width:1.0px;height:29.0px;background:#e1e1e1;"></div>
<div class="r" style="left:1345.9px;top:195.0px;width:1.0px;height:20.0px;background:#d4d4d4;"></div>
<div class="r" style="left:1345.9px;top:235.0px;width:1.0px;height:29.0px;background:#e1e1e1;"></div>
<span class="t" style="left:1351.5px;top:187.39px;font-size:16.20px;letter-spacing:0.000px;transform:scaleX(0.920);transform-origin:0 0;">7</span>
<div class="r" style="left:1402.9px;top:205.0px;width:1.0px;height:10.0px;background:#d4d4d4;"></div>
<div class="r" style="left:1402.9px;top:235.0px;width:1.0px;height:29.0px;background:#e1e1e1;"></div>
<div class="r" style="left:1459.9px;top:195.0px;width:1.0px;height:20.0px;background:#d4d4d4;"></div>
<div class="r" style="left:1459.9px;top:235.0px;width:1.0px;height:29.0px;background:#e1e1e1;"></div>
<span class="t" style="left:1465.5px;top:187.39px;font-size:16.20px;letter-spacing:0.000px;transform:scaleX(0.920);transform-origin:0 0;">8</span>
<div class="r" style="left:1516.9px;top:205.0px;width:1.0px;height:10.0px;background:#d4d4d4;"></div>
<div class="r" style="left:1516.9px;top:235.0px;width:1.0px;height:29.0px;background:#e1e1e1;"></div>
<div class="r" style="left:1573.9px;top:195.0px;width:1.0px;height:20.0px;background:#d4d4d4;"></div>
<div class="r" style="left:1573.9px;top:235.0px;width:1.0px;height:29.0px;background:#e1e1e1;"></div>
<span class="t" style="left:1579.5px;top:187.39px;font-size:16.20px;letter-spacing:0.000px;transform:scaleX(0.920);transform-origin:0 0;">9</span>
<div class="r" style="left:1630.9px;top:205.0px;width:1.0px;height:10.0px;background:#d4d4d4;"></div>
<div class="r" style="left:1630.9px;top:235.0px;width:1.0px;height:29.0px;background:#e1e1e1;"></div>
<span class="t" style="left:381.6px;top:216.92px;font-size:11.20px;letter-spacing:-0.012px;">Monday, July 6, 2020</span>
<div class="r" style="left:239.0px;top:267.0px;width:130.0px;height:560.0px;background:#ddf1fd;"></div>
<div class="r" style="left:239.0px;top:267.0px;width:130.0px;height:1.0px;background:#dcdcdc;"></div>
<div class="r" style="left:239.0px;top:267.0px;width:1.0px;height:560.0px;background:#dcdcdc;"></div>
<span class="t" style="left:246.6px;top:266.82px;font-size:11.20px;letter-spacing:-0.049px;color:#111;">Calendar - d</span>
<div class="r" style="left:308.0px;top:270.0px;width:61.0px;height:19.0px;background:#fff;"></div>
<div class="r" style="left:371.0px;top:268.0px;width:6.0px;height:559.0px;background:#0072c6;"></div>
<div class="r" style="left:377.0px;top:267.0px;width:1270.0px;height:1.0px;background:#cfe8f8;"></div>
<div class="r" style="left:1232.4px;top:268.0px;width:414.6px;height:559.0px;background:#f0f0f0;"></div>
<div class="r" style="left:433.9px;top:268.0px;width:1.0px;height:559.0px;background:#d9edfa;"></div>
<div class="r" style="left:490.9px;top:268.0px;width:1.0px;height:559.0px;background:#d9edfa;"></div>
<div class="r" style="left:547.9px;top:268.0px;width:1.0px;height:559.0px;background:#d9edfa;"></div>
<div class="r" style="left:604.9px;top:268.0px;width:1.0px;height:559.0px;background:#d9edfa;"></div>
<div class="r" style="left:661.9px;top:268.0px;width:1.0px;height:559.0px;background:#d9edfa;"></div>
<div class="r" style="left:718.9px;top:268.0px;width:1.0px;height:559.0px;background:#d9edfa;"></div>
<div class="r" style="left:775.9px;top:268.0px;width:1.0px;height:559.0px;background:#d9edfa;"></div>
<div class="r" style="left:832.9px;top:268.0px;width:1.0px;height:559.0px;background:#d9edfa;"></div>
<div class="r" style="left:889.9px;top:268.0px;width:1.0px;height:559.0px;background:#d9edfa;"></div>
<div class="r" style="left:946.9px;top:268.0px;width:1.0px;height:559.0px;background:#d9edfa;"></div>
<div class="r" style="left:1003.9px;top:268.0px;width:1.0px;height:559.0px;background:#d9edfa;"></div>
<div class="r" style="left:1060.9px;top:268.0px;width:1.0px;height:559.0px;background:#d9edfa;"></div>
<div class="r" style="left:1117.9px;top:268.0px;width:1.0px;height:559.0px;background:#d9edfa;"></div>
<div class="r" style="left:1174.9px;top:268.0px;width:1.0px;height:559.0px;background:#d9edfa;"></div>
<div class="r" style="left:1231.9px;top:268.0px;width:1.0px;height:559.0px;background:#e1effa;"></div>
<div class="r" style="left:1288.9px;top:268.0px;width:1.0px;height:559.0px;background:#e1effa;"></div>
<div class="r" style="left:1345.9px;top:268.0px;width:1.0px;height:559.0px;background:#e1effa;"></div>
<div class="r" style="left:1402.9px;top:268.0px;width:1.0px;height:559.0px;background:#e1effa;"></div>
<div class="r" style="left:1459.9px;top:268.0px;width:1.0px;height:559.0px;background:#e1effa;"></div>
<div class="r" style="left:1516.9px;top:268.0px;width:1.0px;height:559.0px;background:#e1effa;"></div>
<div class="r" style="left:1573.9px;top:268.0px;width:1.0px;height:559.0px;background:#e1effa;"></div>
<div class="r" style="left:1630.9px;top:268.0px;width:1.0px;height:559.0px;background:#e1effa;"></div>
<div class="r" style="left:1460.0px;top:241px;width:112.4px;height:15px;border:1px solid #7b7fc6;background:#c6c8de repeating-linear-gradient(135deg,transparent 0,transparent 2.400px,#6266ba 2.400px,#6266ba 3.250px,transparent 3.250px,transparent 5.660px);"></div>
<div class="r" style="left:1574.4px;top:241.0px;width:57.0px;height:17.0px;background:#4f52b2;"></div>
<div class="r" style="left:1460.0px;top:267.0px;width:113.9px;height:560.0px;background:#c2e8fc;"></div>
<div class="r" style="left:1460px;top:268px;width:5px;height:559px;border-left:1px solid #a8d0f5;border-right:1px solid #b8dcf8;background:#fff repeating-linear-gradient(135deg,#a8d0f5 0,#a8d0f5 2.200px,transparent 2.200px,transparent 5.660px);"></div>
<div class="r" style="left:1574.4px;top:267.0px;width:56.0px;height:560.0px;background:#c2e8fc;"></div>
<div class="r" style="left:1574.4px;top:268.0px;width:6.5px;height:559.0px;background:#a6cdf5;"></div>
<div class="r" style="left:1630.4px;top:268.0px;width:1.0px;height:559.0px;background:#e2f3fd;"></div>
<span class="t" style="left:1470.3px;top:266.68px;font-size:11.30px;letter-spacing:-0.288px;font-weight:700;color:#000;">test from sub sub</span>
<span class="t" style="left:1470.3px;top:279.58px;font-size:11.30px;letter-spacing:-0.173px;font-weight:700;color:#000;">folder test</span>
<span class="t" style="left:1470.3px;top:292.78px;font-size:11.30px;letter-spacing:0.178px;color:#000;">Sub-Sub foldar</span>
<span class="t" style="left:1470.3px;top:305.68px;font-size:11.30px;letter-spacing:0.062px;color:#000;">test</span>
<span class="t" style="left:1584.4px;top:266.68px;font-size:11.30px;letter-spacing:-0.341px;font-weight:700;color:#000;transform:scaleX(0.840);transform-origin:0 0;">TEST</span>
<div class="r" style="left:1439px;top:247px;width:220px;height:582px;border:5px solid #000;"></div>
</body></html>
